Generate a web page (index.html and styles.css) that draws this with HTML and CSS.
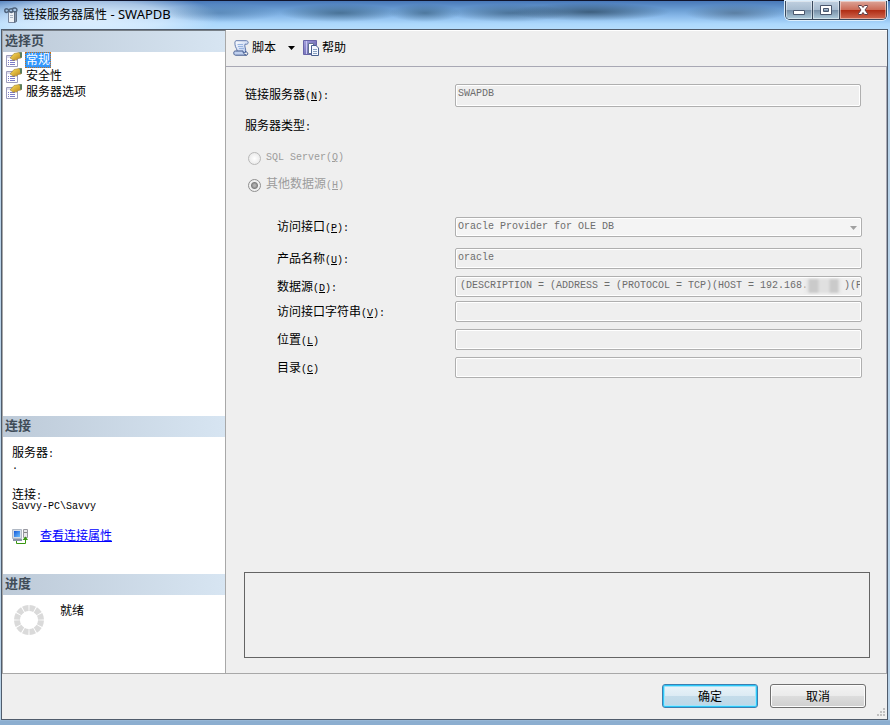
FILE: index.html
```html
<!DOCTYPE html>
<html lang="zh-CN">
<head>
<meta charset="utf-8">
<title>链接服务器属性 - SWAPDB</title>
<link rel="stylesheet" href="styles.css">
</head>
<body>
<svg class="defs" aria-hidden="true">
  <defs>
    <linearGradient id="gold" x1="0" y1="0" x2="1" y2="1"><stop offset="0" stop-color="#ffe860"/><stop offset="1" stop-color="#b88018"/></linearGradient>
    <linearGradient id="blue" x1="0" y1="0" x2="1" y2="1"><stop offset="0" stop-color="#1458d8"/><stop offset="1" stop-color="#6cc0ff"/></linearGradient>
    <linearGradient id="violet" x1="0" y1="0" x2="1" y2="1"><stop offset="0" stop-color="#a8a4e0"/><stop offset="1" stop-color="#5450a0"/></linearGradient>
    <linearGradient id="scroll" x1="0" y1="0" x2="1" y2="1"><stop offset="0" stop-color="#fff"/><stop offset="1" stop-color="#b0c4ec"/></linearGradient>
    <symbol id="page" viewBox="0 0 16 16">
      <path d="M.5 3.500h11v11H.5z" fill="#fff" stroke="#9c9cbc"/>
      <path d="M1 4h10v2H1z" fill="#dcdcec"/>
      <path d="M2 8.500h1M4 8.500h5M2 10.500h1M4 10.500h5M2 12.500h1M4 12.500h5" stroke="#7c7cc8"/>
      <path d="M4 6 8 1.500l5-1 2 2V6l-3 .5-2 2-1-1L7 8.500 6 7z" fill="url(#gold)" stroke="#907028" stroke-width=".5"/>
      <path d="m13 0 3 .2V6l-2-1V2z" fill="#5c7c58"/>
    </symbol>
  </defs>
</svg>
<div class="window">
  <header class="titlebar">
    <svg class="icon" viewBox="0 0 16 16" aria-hidden="true">
      <path d="M4.500 4.500h6v11h-6z" fill="#eef2f6" stroke="#7888a0"/>
      <path d="M10.500 4.500h2v10l-2 1z" fill="#8494ac" stroke="#5e6d80"/>
      <path d="M6 8.500h3M6 10.500h3" stroke="#a8b4c4"/>
      <path d="M.8 3.500c0-2.500 3-2.500 4 0s4 2.500 4 0-3-2.500-4 0-4 2.500-4 0zM8 2c2-1.800 5-1 5 1s-3 2.500-4.500.8" fill="none" stroke="#50647c" stroke-width="1.500"/>
    </svg>
    <h1>链接服务器属性<span> - SWAPDB</span></h1>
    <div class="captions">
      <button type="button" aria-label="最小化"><svg viewBox="0 0 14 12"><path d="M1.500 6.500h11v4h-11z" fill="#fff" stroke="#4a566c"/></svg></button>
      <button type="button" aria-label="最大化"><svg viewBox="0 0 14 12"><path d="M1.500 1.500h11v9h-11zM4.500 4.500h5v3h-5z" fill="#fff" fill-rule="evenodd" stroke="#4a566c"/></svg></button>
      <button type="button" class="close" aria-label="关闭"><svg viewBox="0 0 14 12"><path d="M2.500 1.500h3L7 3.500l1.500-2h3v1L9 6l2.500 3.500v1h-3L7 8.500l-1.500 2h-3v-1L5 6 2.500 2.500z" fill="#fff" stroke="#5c3c44"/></svg></button>
    </div>
  </header>
  <div class="client">
    <aside class="side">
      <section class="pages">
        <h2>选择页</h2>
        <nav>
          <a href="#general" aria-current="page"><svg class="icon"><use href="#page"/></svg><span>常规</span></a>
          <a href="#security"><svg class="icon"><use href="#page"/></svg><span>安全性</span></a>
          <a href="#options"><svg class="icon"><use href="#page"/></svg><span>服务器选项</span></a>
        </nav>
      </section>
      <section class="connection">
        <h2>连接</h2>
        <dl>
          <dt>服务器<span class="mono">:</span></dt><dd class="mono">.</dd>
          <dt>连接<span class="mono">:</span></dt><dd class="mono">Savvy-PC\Savvy</dd>
        </dl>
        <div class="view">
          <svg class="icon" viewBox="0 0 16 16" aria-hidden="true">
            <path d="M.5.500h9v9h-9z" fill="#d4dce8" stroke="#b0b8c4"/><path d="M2 2h6v6H2z" fill="url(#blue)"/>
            <path d="M1 11h9" stroke="#8890a8" stroke-width="2"/>
            <path d="M11.500.500h4v8h-4z" fill="#e8e8ec" stroke="#9898a0"/><path d="M12 3.500h3" stroke="#888"/>
            <path d="M4.500 12v2.500h9V10" fill="none" stroke="#389810"/><path d="M10.500 11 13.500 7.500l2.500 3.500z" fill="#389810"/>
          </svg>
          <a href="#connection">查看连接属性</a>
        </div>
      </section>
      <section class="progress">
        <h2>进度</h2>
        <div class="status">
          <svg viewBox="0 0 30 30" aria-hidden="true"><circle cx="15" cy="15" r="12" pathLength="120" fill="none" stroke="#dadada" stroke-width="6" stroke-dasharray="8.500 1.500" stroke-dashoffset="-.75"/></svg>
          <span>就绪</span>
        </div>
      </section>
    </aside>
    <main class="content">
      <div class="toolbar">
        <button type="button">
          <svg class="icon" viewBox="0 0 16 16" aria-hidden="true">
            <path d="M3 .7h10.500c2.200.3 2.200 3.300.2 3.500H12c-1 2 1.500 5 .5 8.300H4c1-3-2-5-2-8C2 2.500 1.500 1.500 3 .7z" fill="url(#scroll)" stroke="#6078ac"/>
            <path d="M.8 12.500C1 11 2 11 3 11h7c0 2 1 3.500 3.500 4.200H2.500C1 15 .7 14 .8 12.500z" fill="#c0d0ee" stroke="#40588c"/>
            <path d="M12 11.500c2.500 0 4 3 1.500 3.700" fill="none" stroke="#40588c"/>
            <path d="M4.500 4.500H10M5 6.500h5M6 8.500h5" stroke="#98b4e0"/>
          </svg>脚本</button>
        <button type="button" class="drop" aria-label="脚本选项"><svg viewBox="0 0 7 4"><path d="M0 0h7L3.500 4z"/></svg></button>
        <button type="button">
          <svg class="icon" viewBox="0 0 16 16" aria-hidden="true">
            <path d="M.5.500h13v14H.5z" fill="url(#violet)" stroke="#6864a8"/><path d="M3.500 1v13" stroke="#c8c8f0"/>
            <path d="M5.500 3.500h5v10h-5z" fill="#fff" stroke="#607090"/>
            <path d="M8.500 5.500h4.500l2.500 2.500v7.500h-7z" fill="#f4f8ff" stroke="#486090"/><path d="M10 9.500h4M10 11.500h4M10 13.500h4" stroke="#88a0c0"/>
          </svg>帮助</button>
      </div>
      <form class="form" id="general">
        <div class="row top">
          <label for="server">链接服务器<span class="mono">(<u>N</u>):</span></label>
          <input id="server" type="text" value="SWAPDB" disabled>
        </div>
        <fieldset>
          <legend>服务器类型<span class="mono">:</span></legend>
          <label><input type="radio" name="kind" disabled><span class="mono">SQL Server(<u>Q</u>)</span></label>
          <label><input type="radio" name="kind" checked disabled><span>其他数据源<span class="mono">(<u>H</u>)</span></span></label>
        </fieldset>
        <div class="details">
          <div class="row provider">
            <label for="provider">访问接口<span class="mono">(<u>P</u>):</span></label>
            <div class="select"><select id="provider" disabled><option>Oracle Provider for OLE DB</option></select><svg viewBox="0 0 7 4" aria-hidden="true"><path d="M0 0h7L3.500 4z"/></svg></div>
          </div>
          <div class="row">
            <label for="product">产品名称<span class="mono">(<u>U</u>):</span></label>
            <input id="product" type="text" value="oracle" disabled>
          </div>
          <div class="row source">
            <label for="source">数据源<span class="mono">(<u>D</u>):</span></label>
            <div class="masked"><input id="source" type="text" value="(DESCRIPTION = (ADDRESS = (PROTOCOL = TCP)(HOST = 192.168.      )(PORT = 1521)))" disabled><span class="mask"></span></div>
          </div>
          <div class="row">
            <label for="string">访问接口字符串<span class="mono">(<u>V</u>):</span></label>
            <input id="string" type="text" disabled>
          </div>
          <div class="row">
            <label for="location">位置<span class="mono">(<u>L</u>)</span></label>
            <input id="location" type="text" disabled>
          </div>
          <div class="row">
            <label for="catalog">目录<span class="mono">(<u>C</u>)</span></label>
            <input id="catalog" type="text" disabled>
          </div>
        </div>
        <div class="description"></div>
      </form>
    </main>
    <footer class="actions">
      <button type="submit" form="general" class="default">确定</button>
      <button type="button">取消</button>
      <svg class="grip" viewBox="0 0 9 9" aria-hidden="true"><path d="M7 0h2v2H7zM4 3h2v2H4zM7 3h2v2H7zM1 6h2v2H1zM4 6h2v2H4zM7 6h2v2H7z"/></svg>
    </footer>
  </div>
</div>
</body>
</html>
```

FILE: styles.css
```css
* { box-sizing: border-box; }

body {
  margin: 0;
  font: 12px/16px "Liberation Sans", "Noto Sans CJK SC", sans-serif;
  color: #000;
}

h1, h2, dl, dd { margin: 0; font: inherit; }
button, input, select { margin: 0; font: inherit; color: inherit; }
a { color: inherit; text-decoration: none; }
svg { flex: none; }
u { text-underline-offset: 1px; }

.defs { position: absolute; width: 0; height: 0; }
.mono { font-family: "Liberation Mono", monospace; font-size: 10px; }
.icon { width: 16px; height: 16px; }

.window {
  display: flex;
  flex-direction: column;
  min-height: 100vh;
  padding: 0 2px 5px 1px;
  border-top: 1px solid #10142c;
  background: linear-gradient(#b4dafc 30px, #b8d2e8 120px, #b8d2e8 calc(100% - 6px), #8caed0 calc(100% - 4px));
}

/* Title bar */
.titlebar {
  display: flex;
  align-items: flex-start;
  height: 28px;
  margin: 0 -2px 0 -1px;
  padding: 0 3px 0 4px;
  background:
    radial-gradient(ellipse 80px 9px at 590px 11px, #1c3448a0, transparent),
    radial-gradient(ellipse 60px 9px at 510px 12px, #28486490, transparent),
    radial-gradient(ellipse 36px 9px at 425px 12px, #2c506c90, transparent),
    radial-gradient(ellipse 60px 9px at 340px 12px, #2c506ca0, transparent),
    radial-gradient(ellipse 60px 9px at 220px 12px, #406c9880, transparent),
    radial-gradient(ellipse 50px 9px at 735px 12px, #486480a0, transparent),
    radial-gradient(ellipse 130px 26px at 90px 16px, #e8f4ffe0, #e8f4ff90 60%, transparent),
    linear-gradient(#4878b8, #6c9fd4 9px, #8cbcec 16px, #acd8fc 23px, #b4dcfc);
}
.titlebar .icon { margin-top: 6px; }
.titlebar h1 {
  flex: 1;
  padding: 4px 0 0 3px;
  font-family: "Noto Sans", "Noto Sans CJK SC", sans-serif;
  line-height: 18px;
}
.titlebar h1 span { font-size: 13px; }
.captions {
  display: flex;
  border: 1px solid #38485c;
  border-top: 0;
  border-radius: 0 0 5px 5px;
  overflow: hidden;
  box-shadow: 0 0 0 1px #dceefc;
}
.captions button {
  display: flex;
  align-items: center;
  justify-content: center;
  width: 27px;
  height: 18px;
  padding: 0;
  border: 0;
  border-right: 1px solid #38485c;
  background: linear-gradient(#c0d0e0, #a8bcd0 48%, #7890a8 52%, #b0ccdc);
  box-shadow: inset 0 0 0 1px #ffffff70;
}
.captions .close {
  width: 46px;
  border: 0;
  background: linear-gradient(#dca498, #cc6c58 48%, #b02c14 52%, #d06850);
}
.captions svg { width: 14px; height: 12px; }

/* Dialog surface */
.client {
  flex: 1;
  display: grid;
  grid-template: 1fr 45px / 224px 1fr;
  border: 1px solid #505c6c;
  background: #efefef;
}
.side {
  display: flex;
  flex-direction: column;
  border: 1px solid #a8a8a8;
  border-top-color: #788088;
  background: #fff;
}
.side h2 {
  height: 21px;
  padding-left: 2px;
  background: linear-gradient(90deg, #bdcad8, #d7e5f2);
  color: #404c58;
  font-size: 13px;
  font-weight: bold;
  line-height: 19px;
}
.pages { flex: 1; }
.pages nav a { display: flex; height: 16px; padding-left: 3px; gap: 3px; line-height: 17px; }
.pages nav span { padding: 0 1px; }
.pages nav [aria-current] span { background: #3297fd; color: #fff; outline: 1px dotted #c07020; outline-offset: -1px; }
.connection { height: 158px; }
.connection dl { padding: 8px 9px 0; }
.connection dt { height: 16px; }
.connection dd { height: 10px; line-height: 8px; }
.connection dd:first-of-type { margin-bottom: 16px; line-height: 12px; }
.view { display: flex; gap: 12px; padding: 15px 9px 0; }
.view .icon { margin-top: 1px; }
.view a { color: #00f; text-decoration: underline; }
.progress { height: 99px; }
.status { display: flex; gap: 16px; padding: 8px 11px; }
.status svg { width: 30px; height: 30px; margin-top: 2px; }

/* Right pane */
.content {
  display: flex;
  flex-direction: column;
  min-width: 0;
  border-top: 1px solid #fff;
  border-bottom: 1px solid #a8a8a8;
}
.toolbar {
  display: flex;
  align-items: center;
  height: 36px;
  padding: 0 0 2px 5px;
  border-bottom: 1px solid #a8a8b4;
}
.toolbar button {
  display: flex;
  align-items: center;
  gap: 3px;
  height: 24px;
  padding: 0 2px;
  border: 0;
  background: none;
}
.toolbar .drop { padding: 0 6px 0 10px; }
.toolbar .drop svg { width: 7px; height: 4px; }

.form {
  flex: 1;
  display: flex;
  flex-direction: column;
  padding: 17px 16px 15px 18px;
  border-right: 1px solid #a8a8b4;
}
.row {
  display: grid;
  grid-template-columns: 178px 1fr;
  align-items: center;
  height: 21px;
  margin-bottom: 7px;
}
.row.top { grid-template-columns: 210px 1fr; height: 23px; margin: 0 9px 10px 1px; }
.row input, .row select {
  width: 100%;
  height: 21px;
  padding: 0 2px 2px;
  border: 1px solid #afafaf;
  border-radius: 2px;
  box-shadow: inset 0 0 0 1px #fff;
  background: #efefef;
  color: #6d6d6d;
  font-family: "Liberation Mono", monospace;
  font-size: 10px;
  opacity: 1;
}
.row.top input { height: 23px; padding-bottom: 4px; }
.row select { appearance: none; height: 20px; padding: 1px 2px 0; background: #f4f4f4; }
.select, .masked { position: relative; display: flex; }
.select svg { position: absolute; top: 9px; right: 4px; width: 9px; height: 4px; fill: #a0a0a0; }
.masked input { padding: 0 1px 2px 4px; }
.mask {
  position: absolute;
  top: 3px;
  left: 350px;
  width: 36px;
  height: 14px;
  background: linear-gradient(90deg, #e8e8e8 3px, #cacaca 4px 13px, #e0e0e0 14px 24px, #cacaca 25px 33px, #e8e8e8 34px);
  filter: blur(1px);
}

fieldset {
  min-width: 0;
  margin: 0 1px;
  padding: 0;
  border: 0;
  color: #9c9c9c;
}
legend { height: 16px; padding: 0; margin-bottom: 17px; color: #000; line-height: 18px; }
fieldset label { display: flex; align-items: center; gap: 5px; height: 16px; padding-left: 3px; }
fieldset label + label { margin-top: 11px; }
fieldset input {
  appearance: none;
  width: 13px;
  height: 13px;
  border: 1px solid #b8b8b8;
  border-radius: 50%;
  background: radial-gradient(#fff, #e4e4e4);
}
fieldset input:checked { border-color: #909090; background: radial-gradient(#b0b0b0 1px, #808080 3px, #f0f0f0 4px); }

.details { margin: 23px 8px 0 33px; }
.details label { padding-top: 3px; }
.details .provider { height: 20px; margin-bottom: 12px; }
.details .source { margin-bottom: 4px; }
.description { flex: 1; min-height: 60px; margin-top: 187px; border: 1px solid #646464; }

/* Buttons */
.actions {
  grid-column: 1 / -1;
  position: relative;
  display: flex;
  justify-content: flex-end;
  align-items: center;
  gap: 12px;
  padding: 0 21px 2px 0;
}
.actions button {
  width: 96px;
  height: 24px;
  padding: 2px 0 0;
  border: 1px solid #707070;
  border-radius: 3px;
  background: linear-gradient(#f3f3f3, #ebebeb 49%, #dddddd 51%, #cfcfcf);
  box-shadow: inset 0 0 0 1px #fcfcfc;
}
.actions .default {
  border-color: #3c7fb1;
  background: linear-gradient(#eaf4f9, #dcebf4 49%, #c4dcea 51%, #bcd8e8);
  box-shadow: inset 0 0 0 1px #2cc8f8, inset 0 0 0 2px #a0e4fa;
}
.grip { position: absolute; right: 2px; bottom: 2px; width: 9px; height: 9px; fill: #c0c0c0; }
```
